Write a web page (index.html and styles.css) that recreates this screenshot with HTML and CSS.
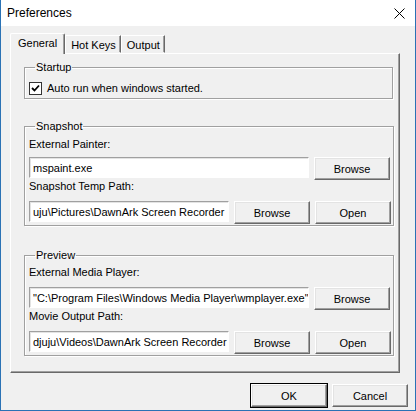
FILE: index.html
```html
<!DOCTYPE html>
<html lang="en">
<head>
  <meta charset="UTF-8" />
  <title>Preferences</title>
  <link rel="stylesheet" href="styles.css">
</head>
<body>
  <div class="window">
    <div class="titlebar">
      <span class="title">Preferences</span>
      <svg class="close" width="11" height="11" viewBox="0 0 11 11">
        <path d="M0.5 0.5 L10.5 10.5 M10.5 0.5 L0.5 10.5" stroke="#000" stroke-width="1" fill="none"/>
      </svg>
    </div>

    <div class="content">
      <div class="tabs">
        <div class="tab active">General</div>
        <div class="tab">Hot Keys</div>
        <div class="tab">Output</div>
      </div>

      <div class="panel">
        <fieldset class="group startup">
          <legend>Startup</legend>
          <label class="check-row">
            <span class="checkbox">
              <svg width="9" height="9" viewBox="0 0 9 9">
                <path d="M1 4 L3.5 6.5 L8 1.5" stroke="#000" stroke-width="1.8" fill="none"/>
              </svg>
            </span>
            Auto run when windows started.
          </label>
        </fieldset>

        <fieldset class="group snapshot">
          <legend>Snapshot</legend>
          <div class="field-label first">External Painter:</div>
          <div class="row">
            <div class="input wide">mspaint.exe</div>
            <button class="btn">Browse</button>
          </div>
          <div class="field-label">Snapshot Temp Path:</div>
          <div class="row">
            <div class="input narrow">uju\Pictures\DawnArk Screen Recorder</div>
            <button class="btn">Browse</button>
            <button class="btn">Open</button>
          </div>
        </fieldset>

        <fieldset class="group preview">
          <legend>Preview</legend>
          <div class="field-label first">External Media Player:</div>
          <div class="row">
            <div class="input wide">"C:\Program Files\Windows Media Player\wmplayer.exe"</div>
            <button class="btn">Browse</button>
          </div>
          <div class="field-label">Movie Output Path:</div>
          <div class="row">
            <div class="input narrow">djuju\Videos\DawnArk Screen Recorder</div>
            <button class="btn">Browse</button>
            <button class="btn">Open</button>
          </div>
        </fieldset>
      </div>

      <div class="footer">
        <button class="btn default">OK</button>
        <button class="btn">Cancel</button>
      </div>
    </div>
  </div>
</body>
</html>
```

FILE: styles.css
```css
* {
  box-sizing: border-box;
}
body {
  margin: 0;
  padding: 0;
  font-family: 'Liberation Sans', Arial, sans-serif;
  font-size: 11px;
  color: #000;
  background: #fff;
}
.window {
  width: 416px;
  height: 411px;
  border: 1px solid #2a72b5;
  border-top: none;
  background: #f0f0f0;
  display: flex;
  flex-direction: column;
}
.titlebar {
  height: 26px;
  background: #fff;
  display: flex;
  align-items: center;
  justify-content: space-between;
  padding: 0 10px 0 6px;
  flex-shrink: 0;
}
.title {
  font-size: 12px;
  font-family: 'Liberation Sans', Arial, sans-serif;
}
.close {
  margin-top: 1px;
}
.content {
  padding: 7px 0 0 9px;
}
.tabs {
  display: flex;
  height: 20px;
  align-items: flex-end;
  position: relative;
  z-index: 1;
}
.tab {
  height: 18px;
  padding: 3px 4px 0 5px;
  border: 1px solid;
  border-color: #fff #696969 transparent #fff;
  box-shadow: inset -1px 0 #a0a0a0;
  background: #f0f0f0;
  line-height: 13px;
}
.tab.active {
  height: 21px;
  margin-bottom: -1px;
  padding: 3px 7px 0 7px;
  border-bottom: none;
  border-radius: 2px 2px 0 0;
}
.panel {
  width: 390px;
  height: 320px;
  border: 1px solid;
  border-color: #fff #696969 #696969 #fff;
  box-shadow: inset -1px -1px #a0a0a0;
  padding: 7px 6px 0 13px;
}
.group {
  margin: 0;
  padding: 0 2px 0 4px;
  border: 1px solid #a0a0a0;
  box-shadow: 1px 1px #fff, inset 1px 1px #fff;
  width: 369px;
}
legend {
  padding: 0 1px;
  margin-left: 6px;
  line-height: 13px;
}
.startup {
  padding-top: 8px;
  padding-bottom: 3px;
}
.snapshot {
  margin-top: 21px;
  padding-bottom: 1px;
}
.preview {
  margin-top: 23px;
  padding-bottom: 1px;
}
.check-row {
  display: flex;
  align-items: center;
  gap: 5px;
  line-height: 13px;
}
.checkbox {
  width: 13px;
  height: 13px;
  border: 1px solid #333;
  background: #fff;
  display: flex;
  align-items: center;
  justify-content: center;
}
.field-label {
  line-height: 13px;
  margin: 0 0 8px;
}
.field-label.first {
  margin-top: 5px;
  margin-bottom: 6px;
}
.preview .field-label.first {
  margin-top: 4px;
  margin-bottom: 8px;
}
.row {
  display: flex;
  align-items: flex-start;
  gap: 5px;
  height: 23px;
}
.input {
  height: 21px;
  background: #fff;
  border: 1px solid;
  border-color: #a0a0a0 #fff #fff #a0a0a0;
  box-shadow: inset 1px 1px #e3e3e3;
  padding: 3px 3px 0 3px;
  white-space: nowrap;
  overflow: hidden;
  line-height: 14px;
}
.input.wide {
  width: 280px;
}
.input.narrow {
  width: 200px;
}
.btn {
  width: 76px;
  height: 23px;
  padding: 0;
  font-family: inherit;
  font-size: 11px;
  color: #000;
  background: #f0f0f0;
  border: 1px solid;
  border-color: #fff #696969 #696969 #fff;
  box-shadow: inset -1px -1px #a0a0a0, inset 1px 1px #e3e3e3;
}
.footer {
  display: flex;
  justify-content: flex-end;
  gap: 5px;
  padding: 11px 7px 0 0;
}
.btn.default {
  outline: 1px solid #000;
  outline-offset: 0;
  border-color: #fff #696969 #696969 #fff;
}
```
